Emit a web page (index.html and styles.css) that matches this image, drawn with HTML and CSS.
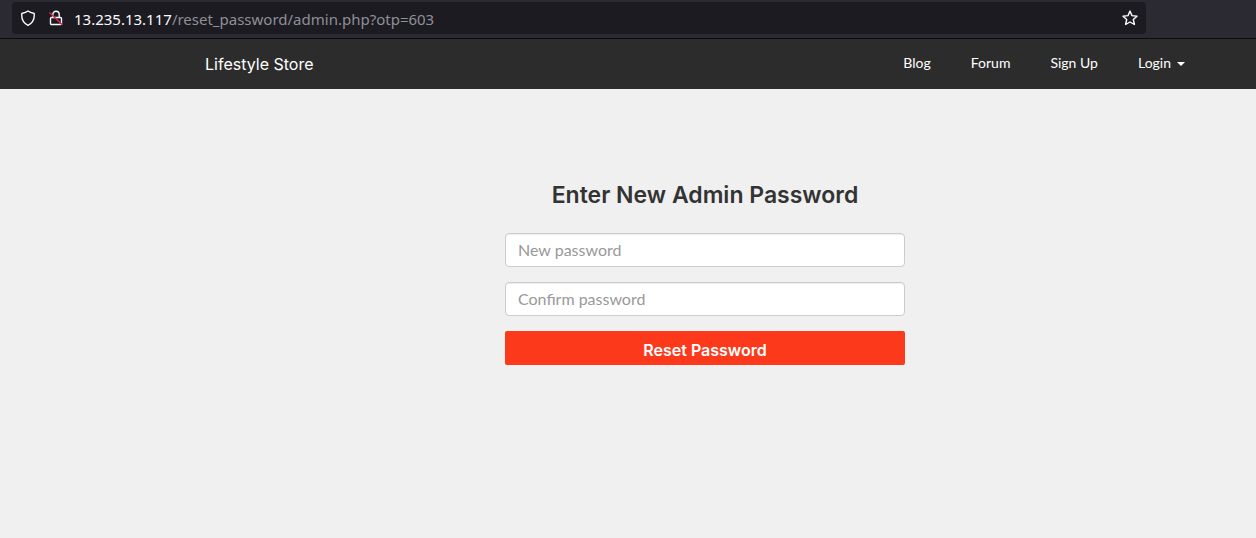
FILE: index.html
```
<!DOCTYPE html>
<html lang="en">
<head>
<meta charset="utf-8">
<meta name="viewport" content="width=device-width, initial-scale=1">
<title>Lifestyle Store</title>
<link rel="stylesheet" href="styles.css">
</head>
<body>
<div class="browser-bar">
  <div class="url-bar">
    <svg class="icon" viewBox="0 0 16 16" aria-hidden="true"><path d="M8 1C10 2.500 12 3 14.200 3.500C14.700 8.500 12.500 13 8 15.300C3.500 13 1.300 8.500 1.800 3.500C4 3 6 2.500 8 1Z"/></svg>
    <svg class="icon" viewBox="0 0 16 16" aria-hidden="true"><path d="M4.800 7V4.400a3.200 3.200 0 0 1 6.400 0V7M3.500 7.500h9a1 1 0 0 1 1 1v5a1 1 0 0 1-1 1h-9a1 1 0 0 1-1-1v-5a1 1 0 0 1 1-1Z"/><path class="slash" d="M1.500 2.500L14.500 15"/></svg>
    <span class="url"><span class="host">13.235.13.117</span>/reset_password/admin.php?otp=603</span>
    <button class="bookmark" type="button" aria-label="Bookmark this page"><svg class="icon" viewBox="0 0 16 16" aria-hidden="true"><path d="M8 1.100L10 5.600L15 6.200L11.300 9.500L12.400 14.500L8 12L3.600 14.500L4.700 9.500L1 6.200L6 5.600Z"/></svg></button>
  </div>
</div>
<nav class="navbar">
  <a class="brand" href="#">Lifestyle Store</a>
  <div class="nav-links">
    <a href="#">Blog</a>
    <a href="#">Forum</a>
    <a href="#">Sign Up</a>
    <a href="#">Login<span class="caret"></span></a>
  </div>
</nav>
<main class="content">
  <form class="reset-form">
    <h1>Enter New Admin Password</h1>
    <input type="password" placeholder="New password" aria-label="New password">
    <input type="password" placeholder="Confirm password" aria-label="Confirm password">
    <button class="submit" type="button">Reset Password</button>
  </form>
</main>
</body>
</html>
```
FILE: styles.css
```
* {
  box-sizing: border-box;
}

body {
  margin: 0;
  background: #f0f0f0;
  color: #333;
  font-family: Lato, sans-serif;
}

.browser-bar {
  padding: 2px 110px 4px 12px;
  background: #2b2a33;
  border-bottom: 1px solid #0c0c0d;
}

.url-bar {
  display: flex;
  align-items: center;
  gap: 12px;
  height: 32px;
  padding: 0 8px;
  border-radius: 4px;
  background: #1c1b22;
}

.icon {
  display: block;
  flex: none;
  width: 16px;
  height: 16px;
  fill: none;
  stroke: #fbfbfe;
  stroke-width: 1.4;
  stroke-linejoin: round;
}

.icon .slash {
  stroke: #e22850;
}

.url {
  flex: 1;
  margin-left: -2px;
  padding-top: 2px;
  color: #8f8f96;
  font: 15px/20px "Noto Sans", sans-serif;
  white-space: nowrap;
}

.host {
  color: #fbfbfe;
}

.bookmark {
  padding: 0;
  border: 0;
  background: none;
}

.navbar {
  display: flex;
  align-items: center;
  justify-content: space-between;
  height: 50px;
  padding: 0 71px 0 205px;
  background: #2c2c2c;
}

.navbar a {
  color: #fff;
  text-decoration: none;
}

.brand {
  font: 16px/20px Inter, sans-serif;
}

.nav-links {
  display: flex;
  gap: 40px;
  font-size: 14px;
  line-height: 20px;
  padding-bottom: 2px;
}

.caret {
  display: inline-block;
  margin-left: 6px;
  border: 4px solid transparent;
  border-top-color: #fff;
  border-bottom: 0;
  vertical-align: middle;
}

.content {
  padding: 92px 51px 0 205px;
}

.reset-form {
  display: grid;
  gap: 15px;
  max-width: 400px;
  margin: 0 auto;
}

h1 {
  margin: 0 0 9px;
  font-family: Inter, sans-serif;
  font-size: 23px;
  line-height: 28px;
  font-weight: 600;
  text-align: center;
}

.reset-form input {
  width: 100%;
  height: 34px;
  padding: 5px 12px 7px;
  border: 1px solid #ccc;
  border-radius: 4px;
  background: #fff;
  box-shadow: inset 0 1px 1px rgba(0, 0, 0, 0.075);
  color: #555;
  font: 16px/20px Lato, sans-serif;
}

.reset-form input::placeholder {
  color: #999;
  opacity: 1;
}

.submit {
  height: 34px;
  padding: 4px 12px 0;
  border: 0;
  border-radius: 2px;
  background: #fc3a1b;
  color: #fff;
  font: 600 16px/20px Inter, sans-serif;
}
```
